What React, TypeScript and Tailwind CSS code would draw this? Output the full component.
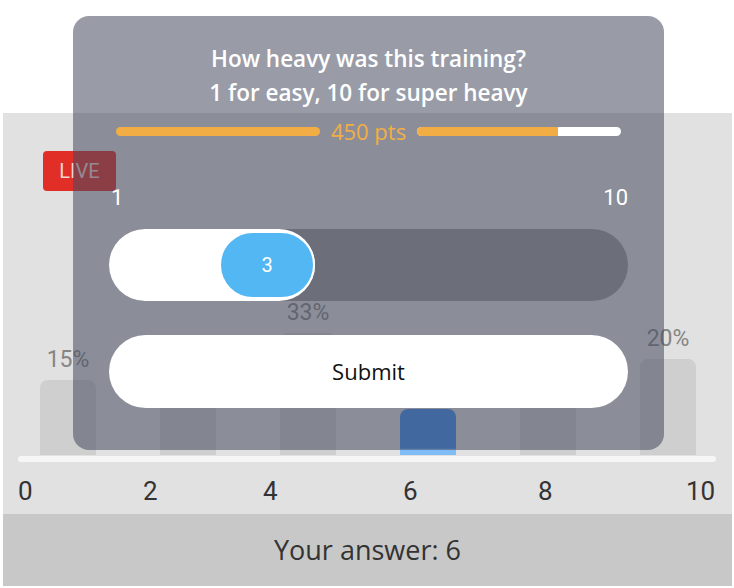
import React from 'react';

const bars = [
  { pct: 15, h: 75, active: false },
  { pct: 12, h: 62, active: false },
  { pct: 33, h: 122, active: false },
  { pct: 8, h: 46, active: true },
  { pct: 12, h: 60, active: false },
  { pct: 20, h: 96, active: false },
];

const ticks = [0, 2, 4, 6, 8, 10];

const App: React.FC = () => {
  return (
    <div className="relative w-[734px] h-[588px] overflow-hidden bg-white font-['Open_Sans',sans-serif]">
      {/* Background: results screen */}
      <div className="flex flex-col h-full pl-[3px] pr-[2px]">
        <div className="h-[113px] bg-white" />

        <div className="relative flex flex-col h-[401px] bg-[#e1e1e1]">
          {/* LIVE badge */}
          <div className="absolute left-[40px] top-[38px] w-[73px] h-[40px] rounded-[4px] bg-[#e12f27] flex items-center justify-center text-[20px] text-[#f3d5d3] font-['Roboto',sans-serif]">
            LIVE
          </div>

          {/* Bars */}
          <div className="h-[342px] flex items-end gap-[64px] pl-[37px] font-['Roboto',sans-serif]">
            {bars.map((b, i) => (
              <div key={i} className="flex flex-col items-center w-[56px]">
                <span className="text-[23px] leading-[24px] text-[#858585] mb-[8px]">{b.pct}%</span>
                <div
                  className={
                    b.active
                      ? 'w-[56px] rounded-t-[8px] bg-[linear-gradient(#3d8ef0_85%,#80bdf7_88%)]'
                      : 'w-[56px] rounded-t-[8px] bg-[#cfcfcf]'
                  }
                  style={{ height: b.h }}
                />
              </div>
            ))}
          </div>

          {/* Axis */}
          <div className="ml-[15px] w-[698px] h-[6px] mt-[1px] rounded-full bg-[#f6f6f6]" />
          <div className="ml-[15px] grid grid-cols-[125px_120px_140px_135px_148px_auto] mt-[14px] text-[26px] leading-[30px] text-[#333] font-['Roboto',sans-serif]">
            {ticks.map((t) => (
              <span key={t}>{t}</span>
            ))}
          </div>
        </div>

        <div className="h-[72px] bg-[#c8c8c8] flex items-center justify-center text-[27px] font-medium text-[#333]">
          Your answer: 6
        </div>
        <div className="flex-1 bg-white" />
      </div>

      {/* Question overlay */}
      <div className="absolute left-[73px] top-[16px] w-[591px] h-[434px] rounded-[16px] bg-[rgba(70,75,95,0.55)] flex flex-col">
        <div className="pt-[26px] text-center text-white text-[22.5px] leading-[34px] font-semibold">
          <p>How heavy was this training?</p>
          <p>1 for easy, 10 for super heavy</p>
        </div>

        {/* Points bar */}
        <div className="mt-[9px] px-[43px] flex items-center gap-[11px]">
          <div className="flex-1 h-[9px] rounded-full bg-[#f2ae45]" />
          <span className="text-[22px] leading-[24px] text-[#f2ae45]">450 pts</span>
          <div className="flex-1 h-[9px] rounded-full bg-white overflow-hidden">
            <div className="h-full w-[69%] bg-[#f2ae45]" />
          </div>
        </div>

        {/* Scale labels */}
        <div className="mt-[43px] pl-[38px] pr-[36px] flex justify-between text-white text-[22px] leading-[24px] font-['Roboto',sans-serif]">
          <span>1</span>
          <span>10</span>
        </div>

        {/* Slider */}
        <div className="mt-[19px] mx-[36px] h-[72px] rounded-full bg-[#6c6e79] relative">
          <div className="absolute left-0 top-0 h-full w-[206px] rounded-full bg-white" />
          <div className="absolute left-[110px] top-[2px] w-[96px] h-[68px] rounded-full bg-[#52b7f2] border-2 border-white flex items-center justify-center text-white text-[20px] font-['Roboto',sans-serif]">
            3
          </div>
        </div>

        {/* Submit */}
        <button className="mt-[34px] mx-[36px] h-[73px] rounded-full bg-white text-[22px] font-medium text-[#111]">
          Submit
        </button>
      </div>
    </div>
  );
};

export default App;
